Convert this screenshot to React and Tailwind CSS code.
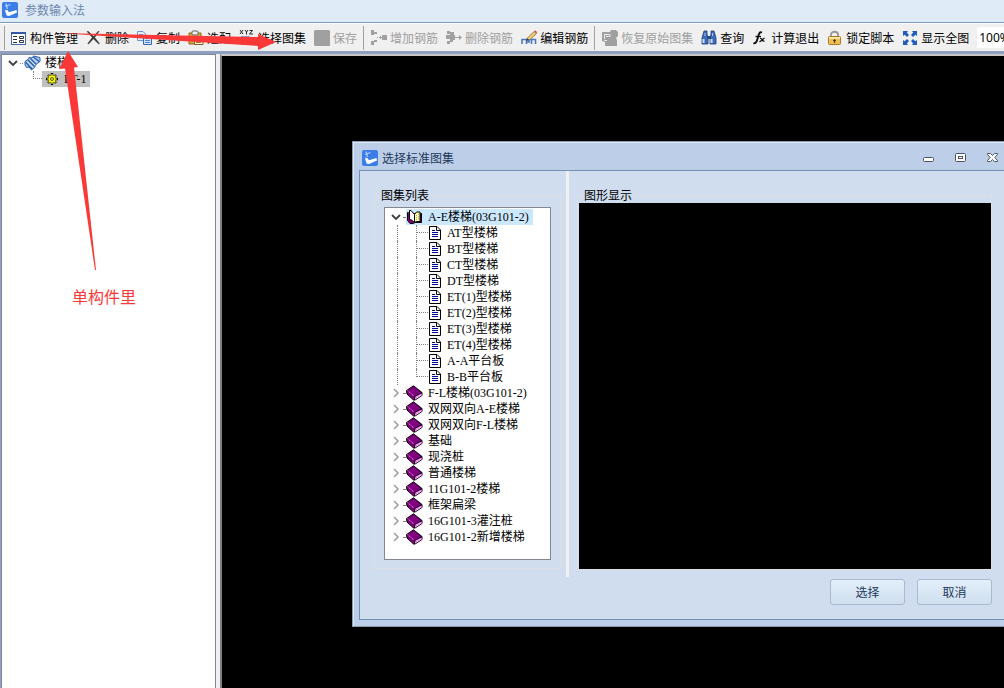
import React, { useState } from 'react'
import clsx from 'clsx'

const AppIcon = () => (
  <svg width="16" height="16" viewBox="0 0 16 16" className="shrink-0">
    <rect width="16" height="16" rx="2" fill="#3b7ce6" />
    <path d="M4 1.5 L5.5 7 M3 4.5 L8.5 2.5 M3.5 7.5 L4 11" stroke="#a9cbff" strokeWidth="1.3" fill="none" />
    <path d="M3.5 8.5 L5.5 8 L7 10.2 L14.5 8 L15 10.5 L7 14 L4.5 13.5 Z" fill="#fff" />
  </svg>
)

const icons = {
  manage: (
    <>
      <rect x="0.5" y="2.5" width="14" height="12" fill="#fff" stroke="#4469b0" />
      <path d="M0 3 H15" stroke="#3158a4" strokeWidth="2" />
      <path d="M2 6.5 H6 M2 9.5 H6 M2 12.5 H6" stroke="#333" />
      <path d="M8.5 6.500 H12.5 V8.500 H8.5 Z M8.5 10.5 H12.5 V12.5 H8.5 Z" fill="none" stroke="#333" />
    </>
  ),
  remove: <path d="M1 1.5 L2.5 1.5 L7.5 6.5 L12.5 1 L13 1.5 L8.6 7.6 L13.5 13.5 L12.5 13.8 L7.4 8.8 L2.5 14 L1.8 13.5 L6.300 7.6 Z" fill="#333" stroke="#333" strokeWidth="0.5" />,
  copy: (
    <>
      <path d="M0.5 1.5 H6 L8.5 4 V10.5 H0.5 Z" fill="#e4eefc" stroke="#6b94d4" />
      <path d="M2 4.5 H6 M2 6.5 H6" stroke="#6a92d4" />
      <path d="M6.5 5.5 H12 L14.5 8.5 V14.5 H6.5 Z" fill="#d2e3fb" stroke="#3566b8" />
      <path d="M8 8.5 H12 M8 10.5 H13 M8 12.5 H13" stroke="#5583cc" />
    </>
  ),
  match: (
    <>
      <path d="M1 3 H13 V14 H1 Z" fill="#d8a83a" stroke="#8a6420" />
      <rect x="4" y="1" width="6" height="4" rx="1" fill="#eee" stroke="#666" />
      <path d="M6.5 7.5 H12 L15 10 V14.5 H6.5 Z" fill="#fff3d0" stroke="#7b5c22" />
      <path d="M8 10.5 H13 M8 12.5 H13" stroke="#9a7a3a" />
    </>
  ),
  atlas: (
    <>
      <path d="M1 0 L4 4 M4 0 L1 4 M6 0 L7.5 2 L9 0 M7.5 2 V4.5 M10.5 0.5 H13.5 L10.5 4 H14" stroke="#222" fill="none" />
      <rect x="2" y="6" width="7" height="9" fill="#79a4ea" />
      <path d="M9 6 L15 14" stroke="#7aa0d8" strokeWidth="1.4" />
    </>
  ),
  save: <path d="M1 0 H15 L16 1 V16 H1 L0 15 V1 Z" fill="#a0a0a0" />,
  addBar: (
    <path d="M0 0 H3 V2 H6 V4 H3 V5 H0 Z M0 11 H3 V10 H6 V12 H3 V15 H0 Z M6 7 H7 V8 H6 Z M8 7 H9 V6 H10 V7 H11 V5 H16 V10 H11 V8 H10 V9 H9 V8 H8 Z" fill="#a0a0a0" />
  ),
  delBar: (
    <path d="M1 1 H4 V2 H8 V5 H9 V7 H13 V5 L16 7.500 L13 10 V8 H9 V10 H7 V12 H4 V14 H1 V11 H4 V9 H0 V5 H4 V4 H1 Z" fill="#a0a0a0" />
  ),
  editBar: (
    <>
      <path d="M1 14 V9.5 H5.500 V14 M5.5 12 H8 V9.5 H14.5 V14 M10.500 9.5 V14" fill="none" stroke="#4a7ac4" strokeWidth="1.6" />
      <path d="M6 8.5 L13 1.5 L15.5 3.5 L8.5 10 Z" fill="#f0cf70" stroke="#73541c" strokeWidth="0.7" />
      <path d="M13 1.5 L14.2 0.3 L16 2 L15.5 3.5 Z" fill="#d05656" />
      <path d="M5 11 L6 8.5 L8.3 10 Z" fill="#333" />
    </>
  ),
  restore: (
    <>
      <path d="M0 2 H8 L9 0 H14 L16 2 V6 L14 8 L15 10 V16 H3 V12 L0 11 Z" fill="#a0a0a0" />
      <path d="M2.5 9 V4.5 H7 M4 6.5 H6 M2.500 10.5 H5 M8 4 V6.500 H6.500" stroke="#f0f0f0" fill="none" />
    </>
  ),
  query: (
    <>
      <path d="M3 1 H6 V4 L7 8 V14 H1 V8 Z M10 1 H13 L15 8 V14 H9 V8 L10 4 Z" fill="#3e6cb8" stroke="#1c3a78" strokeWidth="0.8" />
      <rect x="6" y="6" width="4" height="3" fill="#25498c" />
      <path d="M2.5 9 V13 M10.5 9 V13" stroke="#cfe0fa" strokeWidth="2" />
      <path d="M4 3 V6 M11.5 3 V6" stroke="#a9c5f0" />
    </>
  ),
  calc: (
    <>
      <path d="M10 2.5 C7.5 1.3 6.8 4 6 7 C5 10.5 4.5 14 1.5 13" stroke="#111" strokeWidth="1.9" fill="none" />
      <path d="M3.5 6.500 H9" stroke="#111" strokeWidth="1.3" />
      <path d="M8 8.5 C10.5 7.5 9.5 12 12.5 11 M12.5 8 L7.5 12" stroke="#111" strokeWidth="1.3" fill="none" />
    </>
  ),
  lock: (
    <>
      <path d="M4 7 V4.5 C4 0.8 11 0.8 11 4.5 V7" stroke="#999" strokeWidth="1.8" fill="none" />
      <rect x="1.5" y="6.500" width="12" height="8" rx="1" fill="#f0bf55" stroke="#a87a22" />
      <path d="M2 8 H13" stroke="#fbe6a2" strokeWidth="2" />
      <path d="M7.5 9 V13 M6 10.500 H9" stroke="#553c10" strokeWidth="1.2" />
    </>
  ),
  fit: (
    <path d="M1 1 H6 L4.8 2.5 L7 5 L5 7 L2.7 4.7 L1 6 Z M15 1 H10 L11.2 2.5 L9 5 L11 7 L13.3 4.7 L15 6 Z M1 15 H6 L4.8 13.5 L7 11 L5 9 L2.7 11.3 L1 10 Z M15 15 H10 L11.2 13.5 L9 11 L11 9 L13.3 11.3 L15 10 Z" fill="#1f5cc4" />
  ),
}

const tools = [
  { icon: 'manage', label: '构件管理' },
  { icon: 'remove', label: '删除' },
  { icon: 'copy', label: '复制' },
  { icon: 'match', label: '选配' },
  { icon: 'atlas', label: '选择图集' },
  { icon: 'save', label: '保存', disabled: true },
  null,
  { icon: 'addBar', label: '增加钢筋', disabled: true },
  { icon: 'delBar', label: '删除钢筋', disabled: true },
  { icon: 'editBar', label: '编辑钢筋' },
  null,
  { icon: 'restore', label: '恢复原始图集', disabled: true },
  { icon: 'query', label: '查询' },
  { icon: 'calc', label: '计算退出' },
  { icon: 'lock', label: '锁定脚本' },
  { icon: 'fit', label: '显示全图' },
]

const stairs = [
  'AT型楼梯', 'BT型楼梯', 'CT型楼梯', 'DT型楼梯', 'ET(1)型楼梯',
  'ET(2)型楼梯', 'ET(3)型楼梯', 'ET(4)型楼梯', 'A-A平台板', 'B-B平台板',
]

const books = [
  'F-L楼梯(03G101-2)', '双网双向A-E楼梯', '双网双向F-L楼梯', '基础', '现浇桩',
  '普通楼梯', '11G101-2楼梯', '框架扁梁', '16G101-3灌注桩', '16G101-2新增楼梯',
]

const Chevron = ({ open }) => (
  <svg width="12" height="12" viewBox="0 0 12 12" className="shrink-0">
    <path
      d={open ? 'M2 4 L6 8 L10 4' : 'M4 2 L8 6 L4 10'}
      fill="none"
      stroke={open ? '#404040' : '#a0a0a0'}
      strokeWidth={open ? 1.8 : 1.6}
    />
  </svg>
)

const BookIcon = () => (
  <svg width="17" height="16" viewBox="0 0 17 16" className="shrink-0">
    <path d="M0.5 5.5 L7.500 0.8 L16 7.5 V10.5 L9 15 L7.500 15 L1 9 Z" fill="#800080" stroke="#000" />
    <path d="M9 12 L15.5 8.5 V10.5 L9 14.5 Z" fill="#fff" />
    <path d="M9 13 L15.5 9.5" stroke="#ff40ff" strokeWidth="1.6" strokeDasharray="2 1" />
    <path d="M1.5 5.5 L8.5 11.5" stroke="#e0b8e0" strokeDasharray="1 1" />
    <path d="M8.5 11.5 L16 7.5 M8.500 11.5 V15" stroke="#000" />
  </svg>
)

const OpenBookIcon = () => (
  <svg width="17" height="16" viewBox="0 0 17 16" className="shrink-0">
    <path d="M2.5 3.5 H1.5 V11.5 L4 14.5 H7 L9 13.5 H15.5 V4.500 H14" fill="#800080" stroke="#000" />
    <path d="M3.5 1.500 L5 1.5 L8.500 5.5 V13.500 L5.500 11 L3.5 10.500 Z" fill="#fff" stroke="#000" />
    <path d="M8.5 5.5 L10.500 3 H14 V12.5 H10.500 L8.5 13.5 Z" fill="#ffff9a" stroke="#000" />
    <path d="M10.5 6 V11 M12.5 5 V11" stroke="#a8a8a8" strokeDasharray="1 1" />
  </svg>
)

const PageIcon = () => (
  <svg width="14" height="16" viewBox="0 0 14 16" className="shrink-0">
    <path d="M1.5 1.5 H9 L12.5 5 V14.5 H1.5 Z" fill="#fff" stroke="#000" />
    <path d="M8.5 1.5 V5.5 H12.5" fill="none" stroke="#000" />
    <path d="M4 5.5 H7 M4 7.5 H10 M4 9.5 H10 M4 11.5 H10" stroke="#000090" />
  </svg>
)

const StairsIcon = () => (
  <svg width="17" height="16" viewBox="0 0 17 16" className="shrink-0">
    <path d="M1 6.500 L4.500 4 L5 2.5 L8 3 L9.500 1 L16 2.5 V6.500 L12 9.500 L10.500 12.500 L7.500 15 L5 12 L2.500 12.500 L1 10 Z" fill="#a7c8f2" stroke="#2a5cac" />
    <path d="M1.500 7 L8 14 M4 5 L10.500 11.500 M6.500 3.500 L12 9 M9.500 2 L15 6.500" stroke="#2a5cac" strokeWidth="1.3" />
    <path d="M3 6.500 L9 12.500 M5.500 4.500 L11.500 10.500 M8.500 3.500 L13.500 8" stroke="#e8f2ff" strokeWidth="0.8" />
  </svg>
)

const GearIcon = () => (
  <svg width="12" height="12" viewBox="0 0 12 12" className="shrink-0">
    <path d="M6 0 V12 M0 6 H12 M2 2 L10 10 M10 2 L2 10" stroke="#000" strokeWidth="2.4" />
    <circle cx="6" cy="6" r="3.8" fill="#ff0" stroke="#222" strokeWidth="0.6" />
    <path d="M6 1 V11 M1 6 H11 M2.500 2.500 L9.500 9.500 M9.500 2.500 L2.500 9.500" stroke="#ff0" strokeWidth="1.2" />
    <circle cx="6" cy="6" r="1.5" fill="#ff0" stroke="#222" strokeWidth="0.8" />
  </svg>
)

function Toolbar() {
  return (
    <div className="flex h-[28px] shrink-0 items-center overflow-hidden border-t border-white bg-[#f0f0f0] pl-1">
      <div className="mr-[2px] h-6 w-[2px] border-r border-[#a0a0a0] bg-white" />
      {tools.map((tool, i) =>
        tool ? (
          <button
            key={tool.icon}
            disabled={tool.disabled}
            className={clsx(
              'flex shrink-0 items-center gap-[3px] px-1 whitespace-nowrap',
              tool.disabled ? 'text-[#a0a0a0]' : 'text-black'
            )}
          >
            <svg width="16" height="16" viewBox="0 0 16 16">{icons[tool.icon]}</svg>
            {tool.label}
          </button>
        ) : (
          <div key={i} className="mr-[3px] ml-[2px] h-6 w-px shrink-0 bg-[#a0a0a0]" />
        )
      )}
      <input
        aria-label="缩放比例"
        defaultValue="100%"
        className="ml-1 h-[21px] w-16 shrink-0 bg-white px-[2px] font-['Noto_Sans',sans-serif] text-[12px] outline-none"
      />
    </div>
  )
}

function ComponentTree() {
  return (
    <aside className="w-[215px] shrink-0 border-x border-t border-[#7f8896] bg-white pl-[5px] font-['Liberation_Serif','Noto_Sans_CJK_SC',serif]">
      <button className="flex h-4 items-center">
        <Chevron open />
        <span className="mx-px w-[3px] border-t border-dotted border-[#808080]" />
        <StairsIcon />
        <span className="ml-1">楼梯</span>
      </button>
      <div className="flex h-4">
        <span className="ml-[26px] h-2 w-[9px] border-b border-l border-dotted border-[#808080]" />
        <button className="flex items-center gap-[6px] bg-[#c0c0c0] px-1">
          <GearIcon />
          LT-1
        </button>
      </div>
    </aside>
  )
}

function AtlasTree() {
  const [selected, setSelected] = useState('A-E楼梯(03G101-2)')
  const mark = (name) => selected === name && 'bg-[#cce8ff]'

  return (
    <div className="border border-[#828790] bg-white pt-px pb-[14px] pl-[5px] font-['Liberation_Serif','Noto_Sans_CJK_SC',serif] whitespace-nowrap">
      <button onClick={() => setSelected('A-E楼梯(03G101-2)')} className="flex h-4 items-center">
        <Chevron open />
        <span className="mx-px w-[2px] border-t border-dotted border-[#808080]" />
        <span className={clsx('flex items-center gap-[5px] pr-1', mark('A-E楼梯(03G101-2)'))}>
          <OpenBookIcon />
          A-E楼梯(03G101-2)
        </span>
      </button>
      {stairs.map((name, i) => (
        <button key={name} onClick={() => setSelected(name)} className="flex h-4 items-center">
          <span className="ml-[7px] h-4 w-[19px] border-l border-dotted border-[#808080]" />
          <span className={clsx('h-4 w-3 border-dotted border-[#808080]', i < stairs.length - 1 && 'border-l')}>
            <span className={clsx('block h-2 border-b border-dotted border-[#808080]', i === stairs.length - 1 && 'border-l')} />
          </span>
          <PageIcon />
          <span className={clsx('ml-1 px-[1px]', mark(name))}>{name}</span>
        </button>
      ))}
      {books.map((name) => (
        <button key={name} onClick={() => setSelected(name)} className="flex h-4 items-center">
          <Chevron />
          <span className="mx-px w-[2px] border-t border-dotted border-[#808080]" />
          <BookIcon />
          <span className={clsx('ml-1 px-[1px]', mark(name))}>{name}</span>
        </button>
      ))}
    </div>
  )
}

function WindowButtons() {
  return (
    <div className="flex items-center gap-[20px]">
      <button aria-label="最小化">
        <svg width="12" height="12" viewBox="0 0 12 12">
          <rect x="0.5" y="5.5" width="10" height="4" rx="1" fill="#fff" stroke="#4a5468" />
        </svg>
      </button>
      <button aria-label="最大化">
        <svg width="12" height="12" viewBox="0 0 12 12">
          <rect x="0.5" y="1.5" width="10" height="8" rx="1" fill="#fff" stroke="#4a5468" />
          <rect x="3.5" y="4.5" width="4" height="2" fill="#fff" stroke="#4a5468" />
        </svg>
      </button>
      <button aria-label="关闭">
        <svg width="12" height="12" viewBox="0 0 12 12">
          <path d="M0.5 1.5 H3.5 L5.5 3.5 L7.5 1.5 H10.5 V2.5 L7.8 5.5 L10.5 8.5 V9.5 H7.5 L5.5 7.5 L3.5 9.5 H0.5 V8.5 L3.2 5.5 L0.5 2.5 Z" fill="#fff" stroke="#4a5468" />
        </svg>
      </button>
    </div>
  )
}

function AtlasDialog() {
  const btn =
    'h-[26px] w-[75px] rounded-[3px] border border-[#a9b9d2] bg-gradient-to-b from-[#e3effb] to-[#cfdfee] text-[#1e395b]'

  return (
    <section className="absolute top-[85px] right-[-8px] left-[130px] border border-[#8c9bb0] bg-[#bdcfe8] px-[6px] pb-[6px] shadow-[inset_1px_1px_0_#dfeaf7]">
      <header className="flex h-[28px] items-center gap-1 pt-[3px] pr-[6px] pl-[3px] text-[#1e395b]">
        <AppIcon />
        <h2 className="flex-1">选择标准图集</h2>
        <WindowButtons />
      </header>
      <div className="border border-[#7391b5] bg-[#d0ddee] pr-[12px] pb-[14px]">
        <div className="flex">
          <fieldset className="mt-4 mb-2 ml-[14px] w-[187px] shrink-0 border border-[#dcdfe3] px-[9px] pt-1 pb-2">
            <legend className="-ml-1 px-px leading-4">图集列表</legend>
            <AtlasTree />
          </fieldset>
          <div className="mr-1 ml-[5px] w-[3px] shrink-0 bg-[#f0f0f0]" />
          <fieldset className="mt-4 mb-[7px] ml-1 flex min-w-0 flex-1 flex-col border border-[#dcdfe3] pl-px">
            <legend className="ml-1 px-px leading-4">图形显示</legend>
            <div className="h-full bg-black" />
          </fieldset>
        </div>
        <div className="flex justify-end gap-3 pt-[2px]">
          <button className={btn}>选择</button>
          <button className={btn}>取消</button>
        </div>
      </div>
    </section>
  )
}

// red arrows and note drawn over the window
function Annotations() {
  return (
    <div className="pointer-events-none absolute inset-0">
      <svg width="300" height="280" viewBox="0 0 300 280" fill="#fb3838">
        <path d="M57 33 L258 37 L258 34 L276 42 L258 50 L258 46 Z" />
        <path d="M68 51 L78 67 L74 67.5 L96 270 L95 270 L65 68.5 L59 69 Z" />
      </svg>
      <p className="absolute top-[284px] left-[72px] text-base text-[#fb3838]">单构件里</p>
    </div>
  )
}

function App() {
  return (
    <div className="relative flex h-screen flex-col overflow-hidden bg-[#f0f0f0] font-['Noto_Sans_CJK_SC',sans-serif] text-[12px] leading-4 text-black">
      <header className="flex h-[23px] shrink-0 items-center gap-[7px] border-b border-[#7a9cbf] bg-[#dfebf7] pb-[3px] pl-[2px] text-[#6d86ad]">
        <AppIcon />
        <h1>参数输入法</h1>
      </header>
      <Toolbar />
      <div className="h-[3px] shrink-0 bg-[#8f9fc0]" />
      <main className="flex min-h-0 flex-1 border-l border-[#8f9fc0]">
        <ComponentTree />
        <div className="w-1 shrink-0 bg-[#f0f0f0]" />
        <div className="relative min-w-0 flex-1 overflow-hidden border-t-2 border-l-2 border-t-[#c8c8c8] border-l-[#808080] bg-black">
          <AtlasDialog />
        </div>
      </main>
      <Annotations />
    </div>
  )
}

export default App
